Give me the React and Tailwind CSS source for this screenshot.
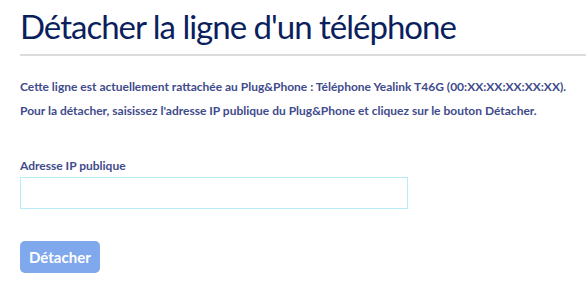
export default function App() {
  return (
    <div className="min-h-[289px] bg-white pl-5 pt-[6px]" style={{ fontFamily: 'Lato, "Noto Sans", sans-serif' }}>
      <h1 className="text-[33px] leading-[40px] tracking-[-1px] text-[#0b1f5e] pb-2">Détacher la ligne d'un téléphone</h1>
      <div className="h-[2px] bg-[#dcdcdc]" />
      <div className="pt-[19px] text-[12px] font-bold text-[#3f4b8c]">
        <p className="leading-[24px]">Cette ligne est actuellement rattachée au Plug&Phone : Téléphone Yealink T46G (00:XX:XX:XX:XX:XX).</p>
        <p className="leading-[24px]">Pour la détacher, saisissez l'adresse IP publique du Plug&Phone et cliquez sur le bouton Détacher.</p>
      </div>
      <div className="pt-[35px]">
        <label className="block text-[12px] font-bold text-[#3f4b8c] leading-[16px] mb-[3px]">Adresse IP publique</label>
        <input type="text" className="block w-[388px] h-[32px] border border-[#b5eef7] outline-none" />
      </div>
      <div className="pt-8">
        <button className="h-[32px] px-[9px] rounded-[5px] bg-[#80a8ec] text-white font-bold text-[15px]">Détacher</button>
      </div>
    </div>
  );
}
